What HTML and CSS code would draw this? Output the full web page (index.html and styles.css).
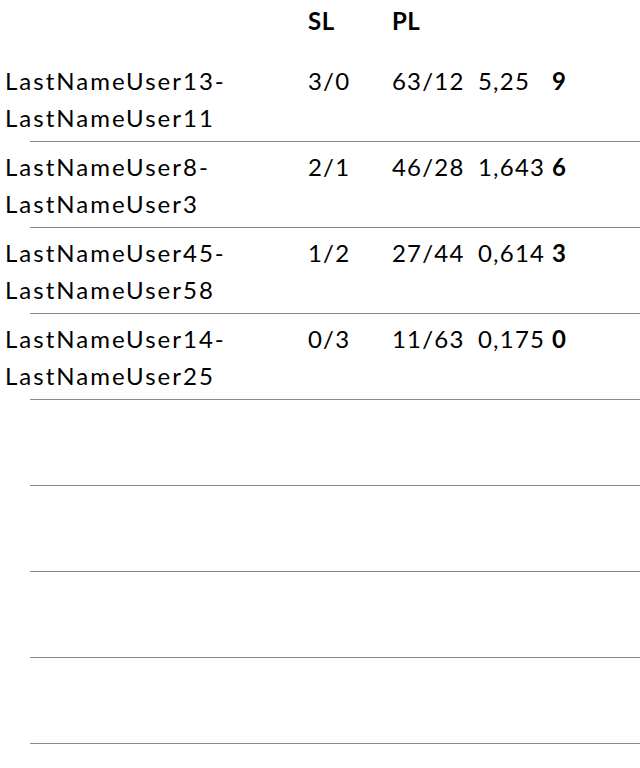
FILE: index.html
```html
<!DOCTYPE html>
<html lang="en">
<head>
    <meta charset="UTF-8">
    <meta name="viewport" content="width=device-width, initial-scale=1.0">
    <title>Standings</title>
    <link rel="stylesheet" href="styles.css">
</head>
<body>
    <div class="standings">
        <div class="row head">
            <span></span>
            <span>SL</span>
            <span>PL</span>
            <span></span>
            <span></span>
        </div>

        <div class="row">
            <span class="name">LastNameUser13-LastNameUser11</span>
            <span>3/0</span>
            <span>63/12</span>
            <span>5,25</span>
            <span class="pts">9</span>
        </div>
        <div class="row">
            <span class="name">LastNameUser8-LastNameUser3</span>
            <span>2/1</span>
            <span>46/28</span>
            <span>1,643</span>
            <span class="pts">6</span>
        </div>
        <div class="row">
            <span class="name">LastNameUser45-LastNameUser58</span>
            <span>1/2</span>
            <span>27/44</span>
            <span>0,614</span>
            <span class="pts">3</span>
        </div>
        <div class="row">
            <span class="name">LastNameUser14-LastNameUser25</span>
            <span>0/3</span>
            <span>11/63</span>
            <span>0,175</span>
            <span class="pts">0</span>
        </div>

        <!-- leere Zeilen -->
        <div class="row empty"></div>
        <div class="row empty"></div>
        <div class="row empty"></div>
        <div class="row empty"></div>
    </div>
</body>
</html>
```

FILE: styles.css
```css
* {
    margin: 0;
    padding: 0;
    box-sizing: border-box;
}

body {
    background-color: #fff;
    color: #000;
    font-family: 'Lato', sans-serif;
    font-size: 24px;
    line-height: 37px;
    letter-spacing: 1.2px;
}

.standings {
    width: 100%;
}

.row {
    display: grid;
    grid-template-columns: 303px 84px 86px 74px 1fr;
    padding: 6px 0 6px 5px;
    min-height: 86px;
    background: linear-gradient(#8a8a8a, #8a8a8a) no-repeat;
    background-position: 30px 100%;
    background-size: calc(100% - 30px) 1px;
}

.row.head {
    min-height: 56px;
    padding-top: 2px;
    font-weight: 700;
    letter-spacing: 0.5px;
    background: none;
}

.name {
    padding-right: 8px;
    letter-spacing: 2px;
}

.pts {
    font-weight: 700;
}
```
